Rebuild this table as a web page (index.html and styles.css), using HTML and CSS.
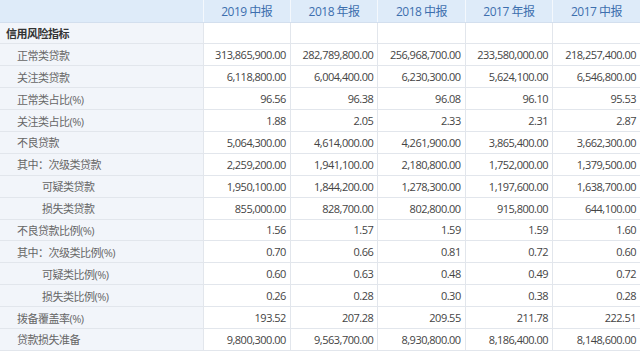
FILE: index.html
```html
<!DOCTYPE html>
<html lang="zh-CN">
<head>
    <meta charset="UTF-8">
    <title>信用风险指标</title>
    <link rel="stylesheet" href="styles.css">
</head>
<body>
    <table class="report">
        <colgroup>
            <col class="col-name">
            <col><col><col><col><col>
        </colgroup>
        <thead>
            <tr>
                <th></th>
                <th>2019 中报</th>
                <th>2018 年报</th>
                <th>2018 中报</th>
                <th>2017 年报</th>
                <th>2017 中报</th>
            </tr>
        </thead>
        <tbody>
            <tr class="group">
                <td class="name">信用风险指标</td>
                <td></td><td></td><td></td><td></td><td></td>
            </tr>
            <tr>
                <td class="name lv1">正常类贷款</td>
                <td>313,865,900.00</td><td>282,789,800.00</td><td>256,968,700.00</td><td>233,580,000.00</td><td>218,257,400.00</td>
            </tr>
            <tr>
                <td class="name lv1">关注类贷款</td>
                <td>6,118,800.00</td><td>6,004,400.00</td><td>6,230,300.00</td><td>5,624,100.00</td><td>6,546,800.00</td>
            </tr>
            <tr>
                <td class="name lv1">正常类占比(%)</td>
                <td>96.56</td><td>96.38</td><td>96.08</td><td>96.10</td><td>95.53</td>
            </tr>
            <tr>
                <td class="name lv1">关注类占比(%)</td>
                <td>1.88</td><td>2.05</td><td>2.33</td><td>2.31</td><td>2.87</td>
            </tr>
            <tr>
                <td class="name lv1">不良贷款</td>
                <td>5,064,300.00</td><td>4,614,000.00</td><td>4,261,900.00</td><td>3,865,400.00</td><td>3,662,300.00</td>
            </tr>
            <tr>
                <td class="name lv1">其中：次级类贷款</td>
                <td>2,259,200.00</td><td>1,941,100.00</td><td>2,180,800.00</td><td>1,752,000.00</td><td>1,379,500.00</td>
            </tr>
            <tr>
                <td class="name lv2">可疑类贷款</td>
                <td>1,950,100.00</td><td>1,844,200.00</td><td>1,278,300.00</td><td>1,197,600.00</td><td>1,638,700.00</td>
            </tr>
            <tr>
                <td class="name lv2">损失类贷款</td>
                <td>855,000.00</td><td>828,700.00</td><td>802,800.00</td><td>915,800.00</td><td>644,100.00</td>
            </tr>
            <tr>
                <td class="name lv1">不良贷款比例(%)</td>
                <td>1.56</td><td>1.57</td><td>1.59</td><td>1.59</td><td>1.60</td>
            </tr>
            <tr>
                <td class="name lv1">其中：次级类比例(%)</td>
                <td>0.70</td><td>0.66</td><td>0.81</td><td>0.72</td><td>0.60</td>
            </tr>
            <tr>
                <td class="name lv2">可疑类比例(%)</td>
                <td>0.60</td><td>0.63</td><td>0.48</td><td>0.49</td><td>0.72</td>
            </tr>
            <tr>
                <td class="name lv2">损失类比例(%)</td>
                <td>0.26</td><td>0.28</td><td>0.30</td><td>0.38</td><td>0.28</td>
            </tr>
            <tr>
                <td class="name lv1">拨备覆盖率(%)</td>
                <td>193.52</td><td>207.28</td><td>209.55</td><td>211.78</td><td>222.51</td>
            </tr>
            <tr>
                <td class="name lv1">贷款损失准备</td>
                <td>9,800,300.00</td><td>9,563,700.00</td><td>8,930,800.00</td><td>8,186,400.00</td><td>8,148,600.00</td>
            </tr>
        </tbody>
    </table>
</body>
</html>
```

FILE: styles.css
```css
* {
    margin: 0;
    padding: 0;
    box-sizing: border-box;
}

body {
    background: #ffffff;
    font-family: "Open Sans", "Noto Sans CJK SC", sans-serif;
    font-size: 11px;
    letter-spacing: -0.5px;
    color: #444444;
    overflow: hidden;
}

.report {
    width: 640px;
    table-layout: fixed;
    border-collapse: collapse;
}

.report .col-name {
    width: 203px;
}

.report thead th {
    height: 22px;
    background: #deebf9;
    color: #3d6fae;
    font-weight: normal;
    font-size: 12px;
    text-align: center;
    border-left: 1px solid #f4f8fd;
    border-bottom: 1px solid #d3dfee;
}

.report thead th:first-child {
    border-left: none;
}

.report tbody tr {
    height: 21.9px;
}

.report tbody td {
    text-align: right;
    padding: 0 4px 0 0;
    border-bottom: 1px solid #e2e6ec;
    border-left: 1px solid #e2e6ec;
    white-space: nowrap;
}

.report tbody td.name {
    text-align: left;
    background: #f2f5fa;
    border-left: none;
    padding-left: 6px;
    color: #666666;
}

.report tbody tr.group td.name {
    font-weight: bold;
    color: #333333;
}

.report tbody td.name.lv1 {
    padding-left: 17px;
}

.report tbody td.name.lv2 {
    padding-left: 42px;
}
```
